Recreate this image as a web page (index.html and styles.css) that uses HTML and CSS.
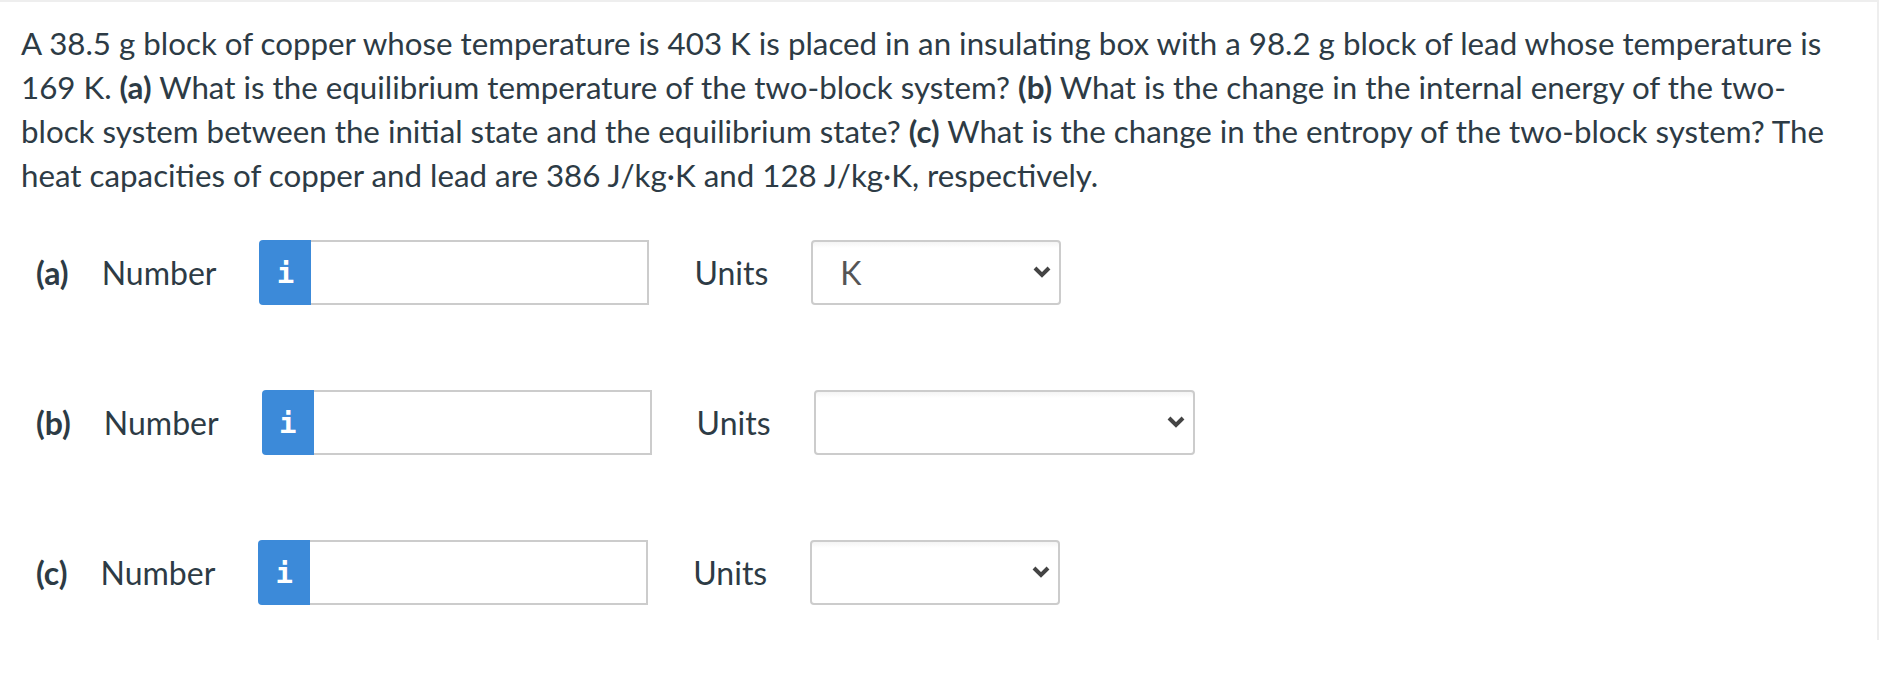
FILE: index.html
```html
<!DOCTYPE html>
<html>
<head>
<meta charset="utf-8">
<link rel="stylesheet" href="styles.css">
</head>
<body>
<div class="question">
  <p class="prompt">A 38.5 g block of copper whose temperature is 403 K is placed in an insulating box with a 98.2 g block of lead whose temperature is 169 K. <b>(a)</b> What is the equilibrium temperature of the two-block system? <b>(b)</b> What is the change in the internal energy of the two-block system between the initial state and the equilibrium state? <b>(c)</b> What is the change in the entropy of the two-block system? The heat capacities of copper and lead are 386 J/kg·K and 128 J/kg·K, respectively.</p>

  <div class="row">
    <span class="part">(a)</span>
    <span class="label">Number</span>
    <div class="group">
      <span class="addon">i</span>
      <input class="num" type="text">
    </div>
    <span class="units">Units</span>
    <div class="select short"><span class="val">K</span><svg class="chev" width="18" height="12" viewBox="0 0 18 12"><polyline points="2,2 9,9 16,2" fill="none" stroke="#444" stroke-width="4"/></svg></div>
  </div>

  <div class="row">
    <span class="part">(b)</span>
    <span class="label">Number</span>
    <div class="group">
      <span class="addon">i</span>
      <input class="num" type="text">
    </div>
    <span class="units">Units</span>
    <div class="select long"><span class="val"></span><svg class="chev" width="18" height="12" viewBox="0 0 18 12"><polyline points="2,2 9,9 16,2" fill="none" stroke="#444" stroke-width="4"/></svg></div>
  </div>

  <div class="row">
    <span class="part">(c)</span>
    <span class="label">Number</span>
    <div class="group">
      <span class="addon">i</span>
      <input class="num" type="text">
    </div>
    <span class="units">Units</span>
    <div class="select short"><span class="val"></span><svg class="chev" width="18" height="12" viewBox="0 0 18 12"><polyline points="2,2 9,9 16,2" fill="none" stroke="#444" stroke-width="4"/></svg></div>
  </div>
</div>
</body>
</html>
```

FILE: styles.css
```css
html, body {
  margin: 0;
  padding: 0;
  background: #ffffff;
}

.question {
  margin-right: 3px;
  border-top: 2px solid #eeeeee;
  border-right: 2px solid #eeeeee;
  padding: 19px 20px 40px 21px;
  font-family: Lato, "Open Sans", sans-serif;
  font-size: 31.3px;
  color: #2d3b45;
  height: 640px;
  box-sizing: border-box;
}

.prompt {
  margin: 0;
  line-height: 44px;
}

.prompt b {
  font-weight: 700;
}

.row {
  display: flex;
  align-items: center;
  height: 65px;
  margin-top: 85px;
  padding-left: 15px;
  font-size: 32px;
}

.row:first-of-type {
  margin-top: 43px;
}

.part {
  font-weight: 700;
  margin-right: 33px;
}

.label {
  margin-right: 43px;
}

.group {
  display: flex;
  height: 65px;
}

.addon {
  width: 52px;
  height: 65px;
  background: #3c8ad9;
  border-radius: 4px 0 0 4px;
  color: #ffffff;
  font-family: "DejaVu Sans Mono", monospace;
  font-weight: 700;
  font-size: 29px;
  display: flex;
  align-items: center;
  justify-content: center;
}

.num {
  width: 338px;
  height: 65px;
  box-sizing: border-box;
  border: 2px solid #cccccc;
  border-left: none;
  margin: 0;
  padding: 0 12px;
  outline: none;
  font-family: Lato, sans-serif;
  font-size: 28px;
  background: #ffffff;
}

.units {
  margin-left: 45px;
  margin-right: 43px;
}

.select {
  height: 65px;
  box-sizing: border-box;
  border: 2px solid #cccccc;
  border-radius: 4px;
  background: linear-gradient(#f4f4f4, #ffffff 6px);
  display: flex;
  align-items: center;
  justify-content: space-between;
  padding: 0 8px 0 27px;
  color: #555555;
}

.select.short {
  width: 250px;
}

.select.long {
  width: 381px;
}

.chev {
  display: block;
  margin-top: -2px;
}
```
